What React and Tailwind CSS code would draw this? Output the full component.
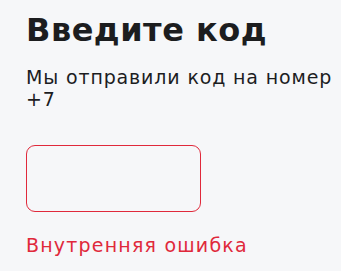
export default function App() {
  return (
    <div className="w-[341px] h-[271px] bg-[#f6f7f9] overflow-hidden pl-[26px] pt-[11px] font-['DejaVu_Sans',sans-serif]">
      <h1 className="text-[32px] leading-[38px] font-bold text-[#1c1d1f] tracking-[0.5px] whitespace-nowrap">Введите код</h1>
      <p className="mt-[17px] text-[19px] leading-[22px] text-[#1c1d1f] tracking-[0.85px] whitespace-nowrap">Мы отправили код на номер<br />+7</p>
      <div className="mt-[35px] w-[175px] h-[67px] rounded-[9px] border border-[#e0293b] bg-[#f6f7f9]"></div>
      <p className="mt-[22px] text-[19px] leading-[22px] text-[#e0293b] tracking-[1.2px] whitespace-nowrap">Внутренняя ошибка</p>
    </div>
  );
}
